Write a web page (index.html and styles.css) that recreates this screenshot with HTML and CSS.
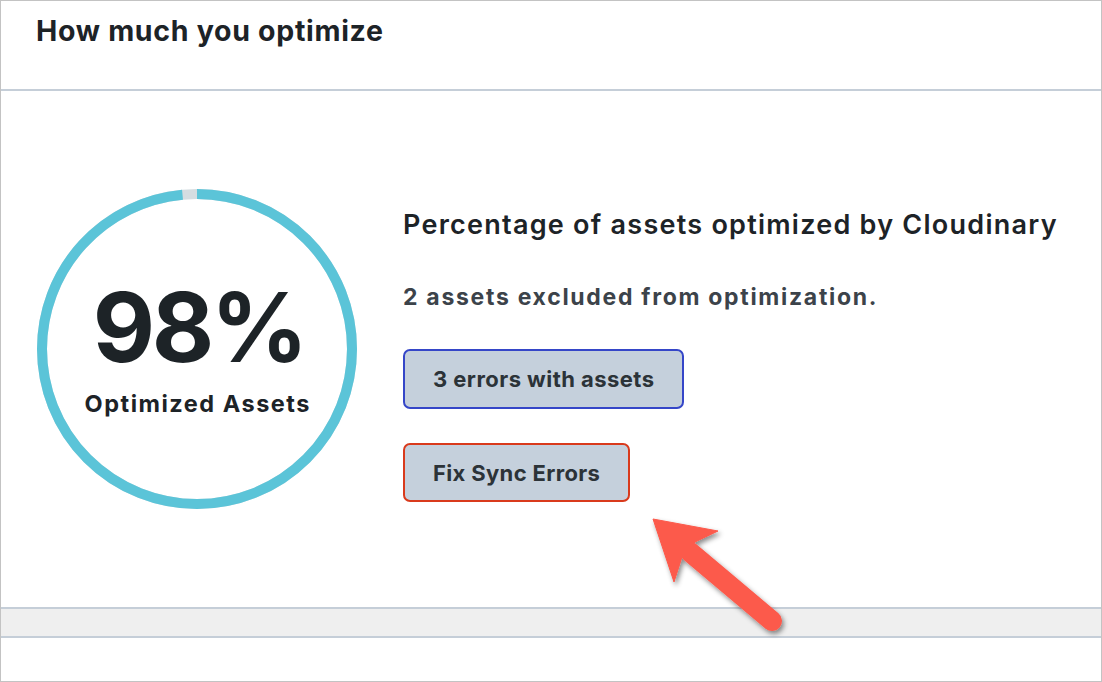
FILE: index.html
```html
<!DOCTYPE html>
<html>
<head>
<meta charset="utf-8">
<link rel="stylesheet" href="styles.css">
</head>
<body>
<div class="frame">
  <div class="header"><h2 class="title">How much you optimize</h2></div>
  <div class="content">
    <div class="ring">
      <svg class="ring-svg" width="320" height="320" viewBox="0 0 320 320">
        <circle cx="160" cy="160" r="155" fill="none" stroke="#d5dde1" stroke-width="10"/>
        <circle cx="160" cy="160" r="155" fill="none" stroke="#5bc4d8" stroke-width="10" stroke-dasharray="959 1000" transform="rotate(-90 160 160)"/>
      </svg>
      <div class="ring-text">
        <div class="pct">98%</div>
        <div class="pct-label">Optimized Assets</div>
      </div>
    </div>
    <div class="info">
      <h3 class="info-title">Percentage of assets optimized by Cloudinary</h3>
      <p class="info-sub">2 assets excluded from optimization.</p>
      <button class="btn btn-blue">3 errors with assets</button>
      <button class="btn btn-red">Fix Sync Errors</button>
    </div>
  </div>
  <div class="band"></div>
  <div class="footer"></div>
  <svg class="arrow" width="1102" height="682" viewBox="0 0 1102 682">
    <defs>
      <filter id="sh" x="-20%" y="-20%" width="140%" height="140%">
        <feDropShadow dx="2" dy="3" stdDeviation="2.5" flood-color="#000" flood-opacity="0.45"/>
      </filter>
    </defs>
    <g filter="url(#sh)" fill="#fc5a4c" stroke="#fc5a4c">
      <line x1="690" y1="552" x2="772" y2="621" stroke-width="20" stroke-linecap="round"/>
      <polygon points="653,519 718,531 695,542 682,557 674,582" stroke-width="1" stroke-linejoin="miter"/>
    </g>
  </svg>
</div>
</body>
</html>
```

FILE: styles.css
```css
* { box-sizing: border-box; }
html, body { margin: 0; padding: 0; background: #fff; }
body { font-family: Inter, "Noto Sans", "Liberation Sans", sans-serif; color: #1d2327; }
.frame {
  position: relative;
  width: 1102px;
  height: 682px;
  border: 1px solid #c3c3c3;
  display: flex;
  flex-direction: column;
  overflow: hidden;
}
.header {
  height: 90px;
  border-bottom: 2px solid #c5ced8;
  padding: 13px 35px 0;
  flex: none;
}
.title {
  margin: 0;
  font-size: 28.5px;
  font-weight: 700;
  line-height: 34px;
  letter-spacing: 0.7px;
  color: #1d2327;
}
.content {
  flex: none;
  height: 516px;
  display: flex;
  align-items: flex-start;
  padding-left: 36px;
  gap: 46px;
}
.ring {
  position: relative;
  width: 320px;
  height: 320px;
  flex: none;
  margin-top: 98px;
}
.ring-svg { display: block; }
.ring-text {
  position: absolute;
  inset: 0;
  display: flex;
  flex-direction: column;
  align-items: center;
  padding-top: 88px;
}
.pct {
  font-size: 96px;
  font-weight: 700;
  line-height: 100px;
  letter-spacing: -3.5px;
  margin-right: -3.5px;
  color: #1d2327;
}
.pct-label {
  font-size: 23.5px;
  font-weight: 700;
  line-height: 28px;
  letter-spacing: 1.5px;
  margin-right: -1.5px;
  margin-top: 13px;
  color: #1d2327;
}
.info {
  display: flex;
  flex-direction: column;
  align-items: flex-start;
  margin-top: 117px;
}
.info-title {
  margin: 0;
  font-size: 27px;
  font-weight: 600;
  line-height: 34px;
  letter-spacing: 1.25px;
  color: #1d2327;
}
.info-sub {
  margin: 41px 0 0;
  font-size: 23px;
  font-weight: 700;
  line-height: 28px;
  letter-spacing: 1.7px;
  color: #3c434a;
}
.btn {
  font-family: inherit;
  font-size: 22px;
  font-weight: 700;
  color: #2c3338;
  background: #c5d0dc;
  border-radius: 7px;
  padding: 0 28px;
  margin: 0;
  cursor: pointer;
}
.btn-blue {
  margin-top: 38px;
  height: 60px;
  letter-spacing: 0.45px;
  border: 2px solid #3546c8;
}
.btn-red {
  margin-top: 34px;
  height: 59px;
  letter-spacing: 0.35px;
  border: 2px solid #d93a1c;
}
.band {
  flex: none;
  height: 31px;
  background: #efefef;
  border-top: 2px solid #c5ced8;
  border-bottom: 2px solid #c5ced8;
}
.footer { flex: 1; }
.arrow {
  position: absolute;
  left: -1px;
  top: -1px;
  pointer-events: none;
}
```
